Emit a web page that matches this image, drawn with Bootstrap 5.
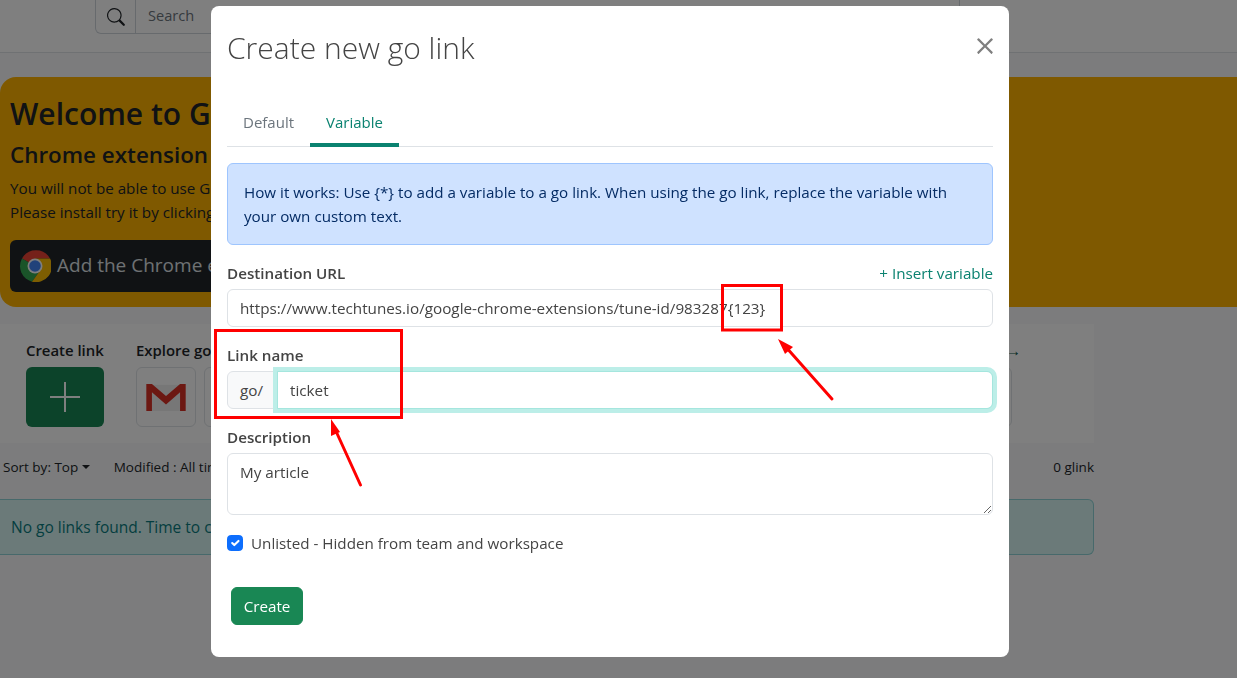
<!DOCTYPE html>
<html lang="en">
<head>
<meta charset="UTF-8">
<meta name="viewport" content="width=device-width, initial-scale=1.0">
<title>Create new go link</title>
<link href="https://cdn.jsdelivr.net/npm/bootstrap@5.3.0/dist/css/bootstrap.min.css" rel="stylesheet">
<style>
body { font-family: "Open Sans", "Noto Sans", sans-serif; font-size: 15.2px; background: #f8f9fa; height: 678px; overflow: hidden; color: #212529; }
.top-bar { height: 53px; background: #fff; border-bottom: 1px solid #dee2e6; padding-left: 95px; }
.search-box { width: 865px; height: 34px; border: 1px solid #ced4da; border-top: 0; border-radius: 0 0 6px 6px; }
.search-icon { width: 40px; border-right: 1px solid #ced4da; }
.search-text { padding-left: 12px; color: #6c757d; font-size: 14.6px; line-height: 30px; }
.promo { margin-top: 24px; height: 230px; background: #ffb200; border-radius: 16px 0 0 16px; padding: 18px 10px; }
.promo h2 { font-size: 30px; font-weight: 600; margin: 0; line-height: 38px; }
.promo h4 { font-size: 22.4px; font-weight: 600; margin: 6px 0 0; line-height: 32px; }
.promo p { margin: 0; font-size: 15.2px; line-height: 24px; }
.promo .first-line { margin-top: 5px; }
.chrome-btn { display: inline-flex; align-items: center; gap: 6px; margin-top: 16px; height: 52px; width: 420px; padding-left: 9px; background: #212529; border-radius: 6px; color: #dee2e6; font-size: 19px; }
.chrome-btn span { margin-top: -2px; }
.page-body { width: 1094px; }
.apps { margin-top: 17px; height: 119px; background: #fff; padding: 17px 26px; }
.apps-title { font-size: 14.9px; font-weight: 600; line-height: 19px; margin-bottom: 7px; }
.plus-tile { width: 78px; height: 60px; background: #198754; border-radius: 6px; }
.app-tile { width: 60px; height: 60px; flex: none; background: #fff; border: 1px solid #dee2e6; border-radius: 6px; }
.explore-col { margin-left: 32px; width: 885px; flex: none; }
.more-arrow { color: #0b5a4c; font-weight: 400; }
.sort-row { font-size: 13.5px; padding: 14px 0 0 3px; height: 56px; }
.sort-row .ms-4 { margin-left: 24px !important; }
.empty-alert { height: 56px; background: #d6f5f3; border: 1px solid #8fd3d6; border-left: 0; border-radius: 0 6px 6px 0; color: #0a7d80; font-size: 15.5px; padding-left: 11px; line-height: 54px; }

.modal-backdrop.show { opacity: .5; }
.go-modal { display: block; }
.go-modal .modal-dialog { max-width: 798px; width: 798px; margin: 6px 0 0 211px; }
.go-modal .modal-content { height: 651px; border: 0; border-radius: 8px; color: #444; }
.go-modal .modal-header { border: 0; padding: 16px 16px 0 16px; height: 84px; align-items: flex-start; }
.go-modal .modal-title { font-size: 30px; font-weight: 300; line-height: 52px; color: #444; }
.go-modal .btn-close { margin: 15px -1px 0 auto; padding: 0; width: 18px; height: 18px; opacity: .5; background-size: 18px; }
.go-modal .modal-body { padding: 0 16px; }
.tab-row { height: 57px; border-bottom: 1px solid #dee2e6; }
.tab-row .nav-link { border: 0; background: none; color: #6c757d; padding: 0 16px; height: 57px; line-height: 65px; font-size: 15px; }
.tab-row .nav-link.active { color: #0a8270; border-bottom: 4px solid #0a8270; margin-bottom: -1px; }
.how-alert { margin: 16px 0 0; height: 82px; background: #cfe2ff; border: 1px solid #9ec5fe; color: #052c65; padding: 16px; border-radius: 6px; line-height: 24px; }
.field-label { font-weight: 600; color: #444; line-height: 20px; }
.dest-head { margin-top: 18px; margin-bottom: 6px; height: 20px; line-height: 20px; }
.insert-var { color: #0a8270; text-decoration: none; }
.go-modal .form-control, .go-modal .input-group-text { font-size: 15.25px; color: #444; height: 38px; padding: 6px 12px; border-color: #dee2e6; }
.go-modal .input-group-text { background: #f8f9fa; width: 51px; }
.link-label { margin-top: 18px; margin-bottom: 6px; }
.go-modal .form-control.focused { border-color: #a5e6de; box-shadow: 0 0 0 4px #bceee8; position: relative; z-index: 3; }
.desc-label { margin-top: 18px; margin-bottom: 6px; }
.go-modal textarea.form-control { height: 62px; padding-top: 7px; }
.unlist { margin-top: 18px; padding-left: 24px; min-height: 20px; margin-bottom: 0; line-height: 20px; }
.unlist .form-check-input { width: 16px; height: 16px; margin-top: 2px; margin-left: -24px; }
.create-btn { margin: 34px 0 0 4px; width: 72px; height: 38px; padding: 0; font-size: 15.2px; }
.note-layer { position: absolute; left: 0; top: 0; z-index: 1060; pointer-events: none; }
</style>
</head>
<body>

<div class="top-bar">
  <div class="search-box d-flex">
    <div class="search-icon d-flex align-items-center justify-content-center">
      <svg width="18" height="18" viewBox="0 0 16 16" fill="#212529"><path d="M11.742 10.344a6.5 6.5 0 1 0-1.397 1.398h-.001l3.85 3.85a1 1 0 0 0 1.415-1.414l-3.85-3.85zM12 6.5a5.5 5.5 0 1 1-11 0 5.5 5.5 0 0 1 11 0z"/></svg>
    </div>
    <div class="search-text">Search</div>
  </div>
</div>

<div class="promo">
  <h2>Welcome to GoLinks</h2>
  <h4>Chrome extension</h4>
  <p class="first-line">You will not be able to use GoLinks</p>
  <p>Please install try it by clicking</p>
  <div class="chrome-btn">
    <svg width="32" height="32" viewBox="0 0 32 32">
      <path d="M16 16 3 8.5A16 16 0 0 1 31 8.5H16z" fill="#ea4335"/>
      <path d="M16 16 3 8.5A16 16 0 0 0 13 31.7L20 22z" fill="#34a853"/>
      <path d="M16 8.5h15A16 16 0 0 1 13 31.7L20 22z" fill="#fbbc05"/>
      <circle cx="16" cy="16" r="7.5" fill="#fff"/><circle cx="16" cy="16" r="5.8" fill="#4285f4"/>
    </svg>
    <span>Add the Chrome extension</span>
  </div>
</div>

<div class="page-body">
  <div class="apps d-flex">
    <div>
      <div class="apps-title">Create link</div>
      <div class="plus-tile d-flex align-items-center justify-content-center">
        <svg width="32" height="32" viewBox="0 0 32 32" stroke="#fff" stroke-width="2"><path d="M16 1v30M1 16h30"/></svg>
      </div>
    </div>
    <div class="explore-col">
      <div class="apps-title d-flex justify-content-between">
        <span>Explore go links</span>
        <span class="more-arrow">&rarr;</span>
      </div>
      <div class="d-flex gap-2">
        <div class="app-tile d-flex align-items-center justify-content-center">
          <svg width="40" height="30" viewBox="0 0 42 32">
            <path d="M4 3h34v28H4z" fill="#eee"/>
            <path d="M0 31V2h6l15 13L36 2h6v29h-6V11L21 24 6 11v20z" fill="#d93025"/>
          </svg>
        </div>
        <div class="app-tile"></div><div class="app-tile"></div><div class="app-tile"></div>
        <div class="app-tile"></div><div class="app-tile"></div><div class="app-tile"></div>
        <div class="app-tile"></div><div class="app-tile"></div><div class="app-tile"></div>
        <div class="app-tile"></div><div class="app-tile"></div><div class="app-tile"></div>
      </div>
    </div>
  </div>
  <div class="sort-row d-flex">
    <span class="dropdown-toggle">Sort by: Top</span>
    <span class="ms-4">Modified : All time</span>
    <span class="ms-auto">0 glink</span>
  </div>
  <div class="empty-alert">No go links found. Time to create one!</div>
</div>

<div class="modal-backdrop show"></div>

<div class="modal go-modal show">
  <div class="modal-dialog">
    <div class="modal-content">
      <div class="modal-header">
        <h4 class="modal-title">Create new go link</h4>
        <button type="button" class="btn-close" aria-label="Close"></button>
      </div>
      <div class="modal-body">
        <ul class="nav tab-row">
          <li class="nav-item"><a class="nav-link" href="#">Default</a></li>
          <li class="nav-item"><a class="nav-link active" href="#">Variable</a></li>
        </ul>
        <div class="how-alert">How it works: Use {*} to add a variable to a go link. When using the go link, replace the variable with your own custom text.</div>

        <div class="d-flex justify-content-between dest-head">
          <span class="field-label">Destination URL</span>
          <a class="insert-var" href="#">+ Insert variable</a>
        </div>
        <input type="text" class="form-control" value="https://www.techtunes.io/google-chrome-extensions/tune-id/983287{123}">

        <div class="field-label link-label">Link name</div>
        <div class="input-group">
          <span class="input-group-text">go/</span>
          <input type="text" class="form-control focused" value="ticket">
        </div>

        <div class="field-label desc-label">Description</div>
        <textarea class="form-control">My article</textarea>

        <div class="form-check unlist">
          <input class="form-check-input" type="checkbox" id="unlisted" checked>
          <label class="form-check-label" for="unlisted">Unlisted - Hidden from team and workspace</label>
        </div>

        <button type="button" class="btn btn-success create-btn">Create</button>
      </div>
    </div>
  </div>
</div>

<!-- red notes drawn on the screenshot -->
<svg class="note-layer" width="1237" height="678" viewBox="0 0 1237 678" fill="none">
  <rect x="722.5" y="285.5" width="59" height="44.5" stroke="#f00" stroke-width="3"/>
  <rect x="215.5" y="330.5" width="186" height="87" stroke="#f00" stroke-width="3"/>
  <path d="M832 399 785 346" stroke="#f00" stroke-width="3" stroke-linecap="round"/>
  <path d="M778 339 793 347 785 354z" fill="#f00"/>
  <path d="M360.5 485 335 429" stroke="#f00" stroke-width="3" stroke-linecap="round"/>
  <path d="M331 419 340 432 331 436z" fill="#f00"/>
</svg>

<script src="https://cdn.jsdelivr.net/npm/bootstrap@5.3.0/dist/js/bootstrap.bundle.min.js"></script>
</body>
</html>
